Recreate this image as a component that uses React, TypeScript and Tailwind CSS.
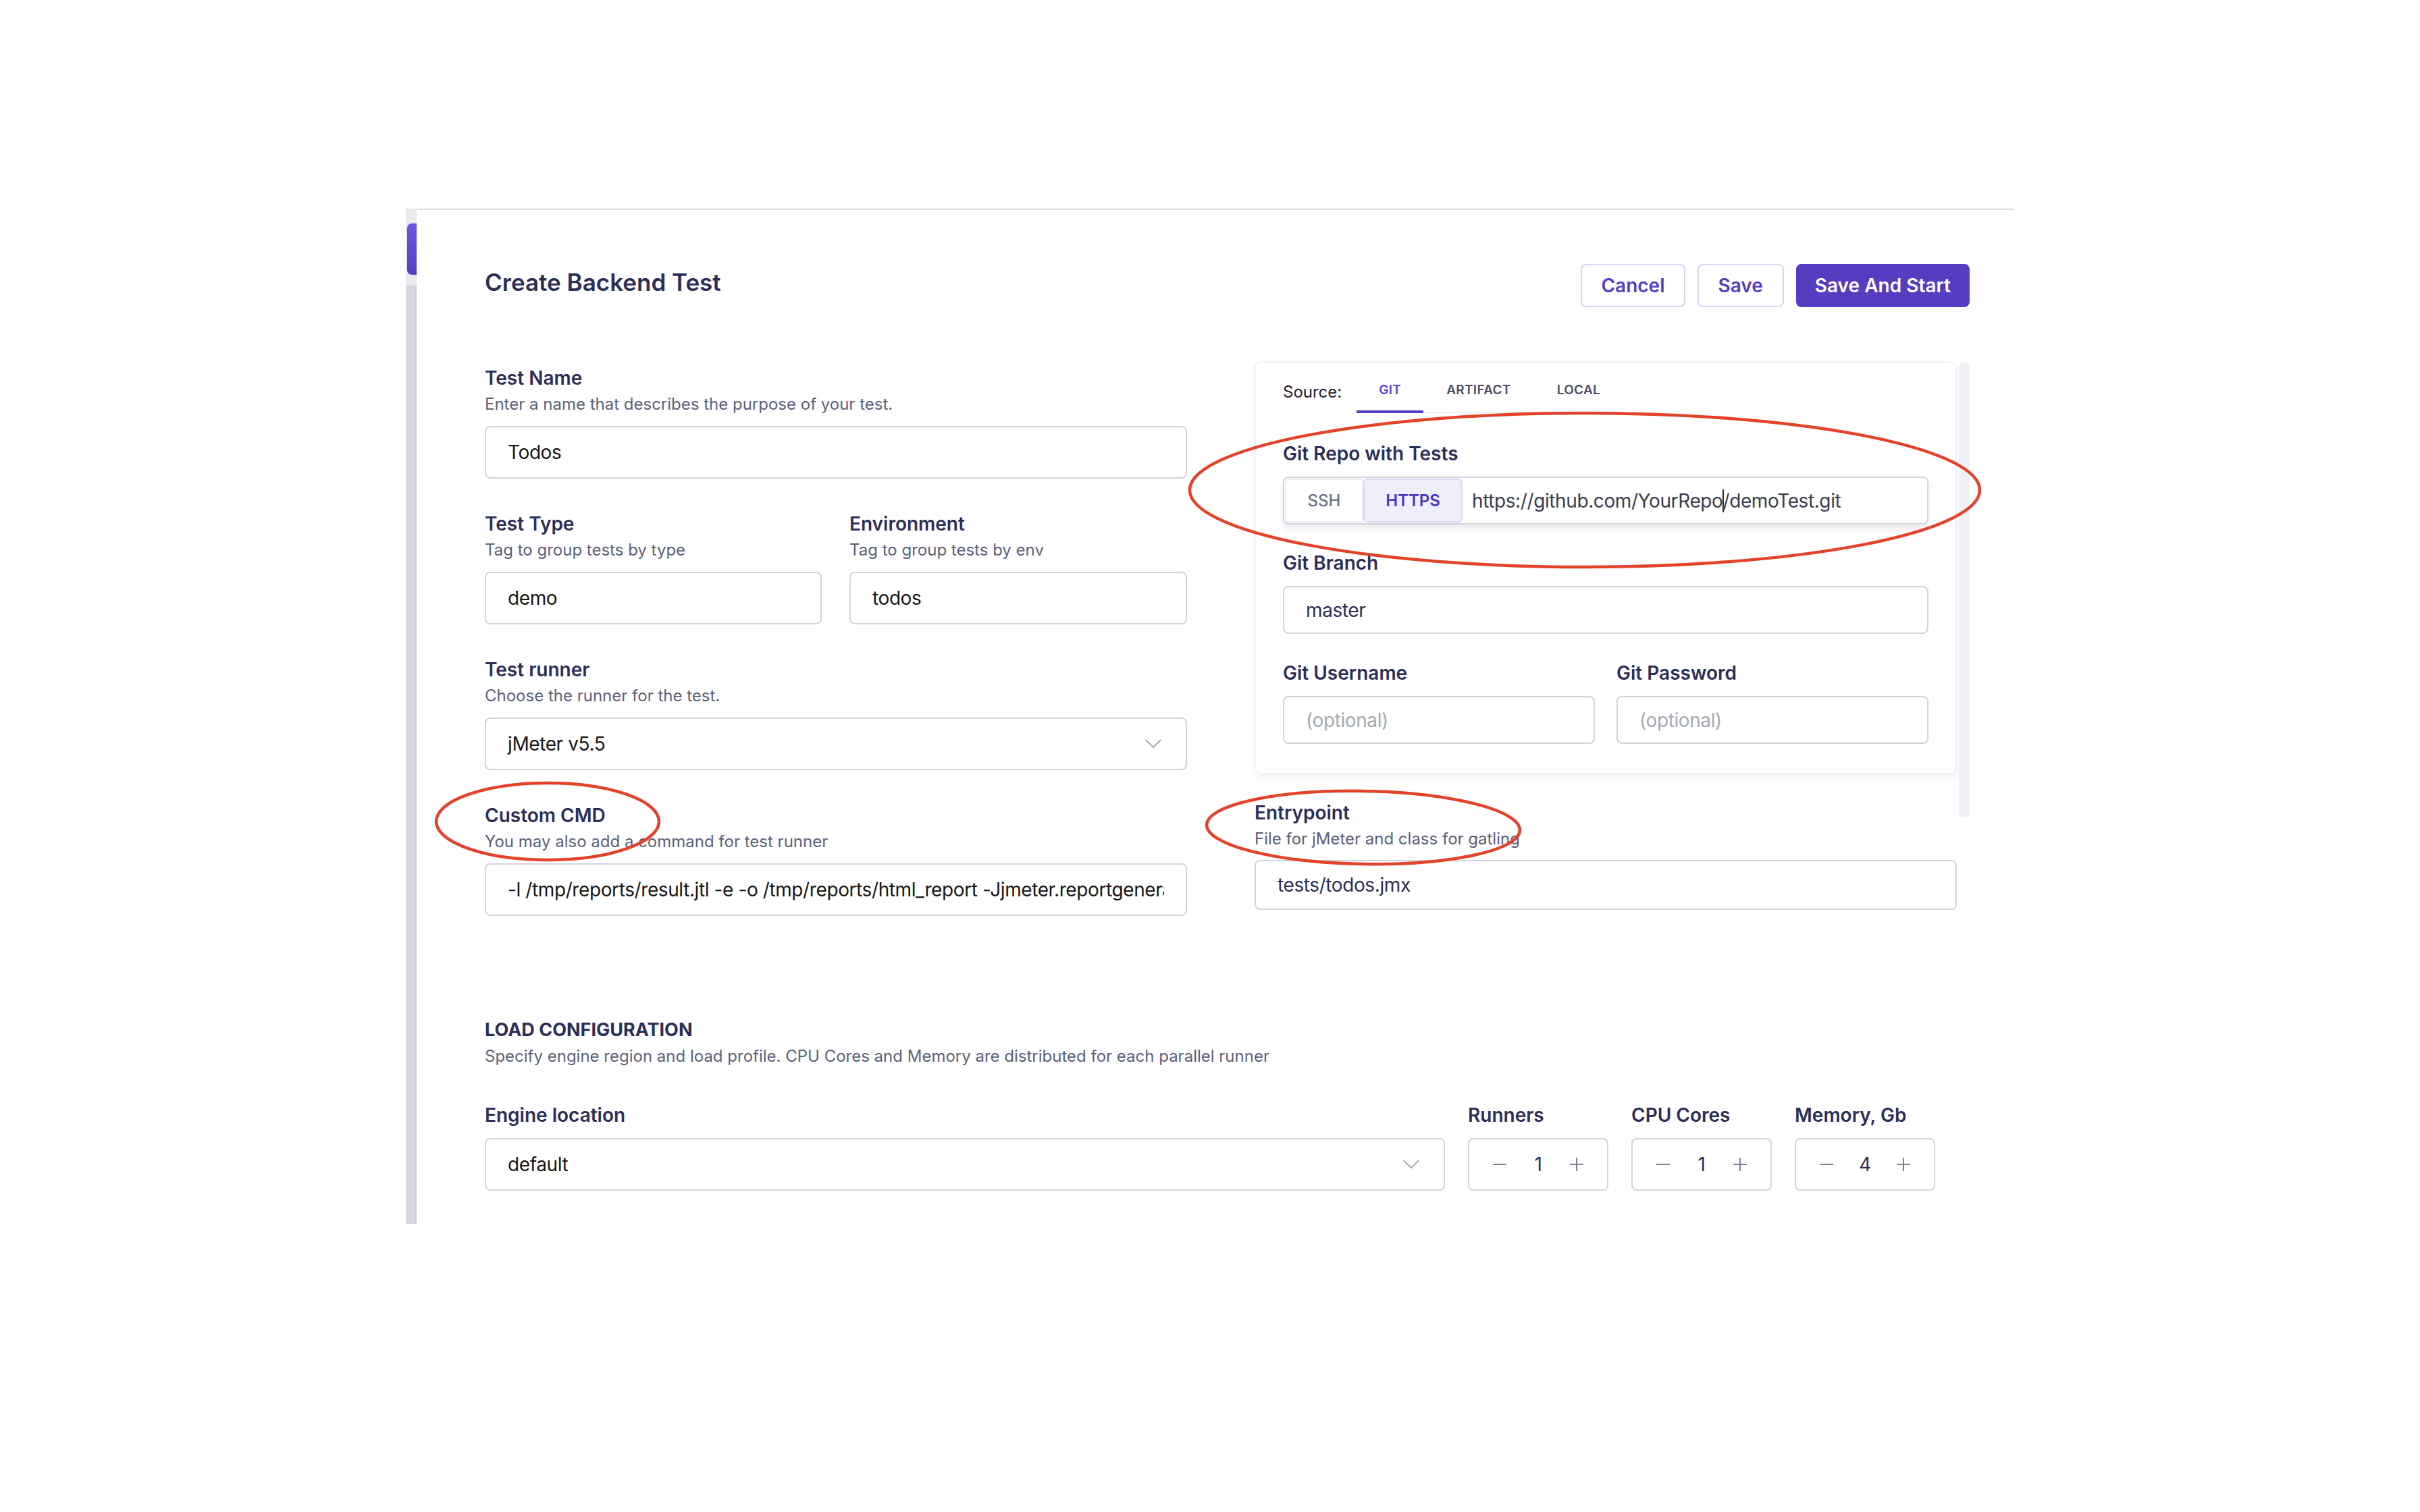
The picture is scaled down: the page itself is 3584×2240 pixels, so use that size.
import React from "react";

const Label = ({ children }: { children: React.ReactNode }) => (
  <div className="text-[28px] leading-[34px] font-semibold text-[#2c2e58]">{children}</div>
);

const Desc = ({ children }: { children: React.ReactNode }) => (
  <div className="mt-[7px] text-[24px] leading-[30px] text-[#5b5f7b]">{children}</div>
);

const Box = ({
  children,
  className = "",
}: {
  children?: React.ReactNode;
  className?: string;
}) => (
  <div
    className={`flex items-center border-2 border-[#d0d4db] rounded-[8px] bg-white text-[28px] tracking-[-0.4px] ${className}`}
  >
    {children}
  </div>
);

const Chevron = () => (
  <svg width="24" height="14" viewBox="0 0 24 14" fill="none">
    <path d="M1 1.5 L12 12 L23 1.5" stroke="#a3a8b3" strokeWidth="2" strokeLinecap="round" />
  </svg>
);

const Field = ({
  label,
  desc,
  children,
}: {
  label: string;
  desc?: string;
  children: React.ReactNode;
}) => (
  <div className="flex flex-col">
    <Label>{label}</Label>
    {desc && <Desc>{desc}</Desc>}
    {children}
  </div>
);

const Stepper = ({ label, value }: { label: string; value: number }) => (
  <div className="flex flex-col w-[208px]">
    <Label>{label}</Label>
    <Box className="mt-[17px] h-[78px] px-[34px] justify-between">
      <svg width="22" height="22" viewBox="0 0 22 22">
        <path d="M1 11 H21" stroke="#7d8197" strokeWidth="2" />
      </svg>
      <span className="text-[#2c2e58]">{value}</span>
      <svg width="22" height="22" viewBox="0 0 22 22">
        <path d="M1 11 H21 M11 1 V21" stroke="#7d8197" strokeWidth="2" />
      </svg>
    </Box>
  </div>
);

export default function App() {
  return (
    <div className="relative w-[3584px] h-[2240px] bg-white font-['Inter','Liberation_Sans',sans-serif] overflow-hidden">
      <div className="flex pt-[309px] pl-[601px]">
        {/* side strip */}
        <div className="w-[16px] h-[1504px] flex flex-col bg-[#d6d8e4] border-r-[3px] border-[#cbcdda]">
          <div className="h-[114px] bg-[#e9e9ee] -mr-[3px] pt-[22px] pl-[2px]">
            <div className="h-[76px] w-[14px] rounded-l-[7px] bg-gradient-to-b from-[#6c54e2] to-[#5640c2]" />
          </div>
        </div>

        {/* main panel */}
        <div className="w-[2366px] border-t-2 border-[#dcdde1] pl-[101px] pr-[66px]">
          {/* header */}
          <div className="mt-[80px] flex justify-between items-start">
            <h1 className="mt-[6px] text-[35px] leading-[42px] font-semibold text-[#2c2e58]">
              Create Backend Test
            </h1>
            <div className="flex gap-[18px]">
              <button className="h-[64px] px-[28px] rounded-[8px] border-2 border-[#d8d3f4] text-[28px] font-semibold text-[#553dc2]">
                Cancel
              </button>
              <button className="h-[64px] px-[29px] rounded-[8px] border-2 border-[#d8d3f4] text-[28px] font-semibold text-[#553dc2]">
                Save
              </button>
              <button className="h-[64px] px-[26px] rounded-[8px] border-2 border-[#553cc0] bg-[#553cc0] text-[28px] font-semibold text-white">
                Save And Start
              </button>
            </div>
          </div>

          {/* form columns */}
          <div className="mt-[80px] flex gap-[100px]">
            {/* left column */}
            <div className="w-[1040px] pt-[8px] flex flex-col gap-[50px]">
              <Field label="Test Name" desc="Enter a name that describes the purpose of your test.">
                <Box className="mt-[17px] h-[78px] px-[32px] text-[#161616]">Todos</Box>
              </Field>
              <div className="flex gap-[41px]">
                <div className="w-[499px]">
                  <Field label="Test Type" desc="Tag to group tests by type">
                    <Box className="mt-[17px] h-[78px] px-[32px] text-[#161616]">demo</Box>
                  </Field>
                </div>
                <div className="w-[500px]">
                  <Field label="Environment" desc="Tag to group tests by env">
                    <Box className="mt-[17px] h-[78px] px-[32px] text-[#161616]">todos</Box>
                  </Field>
                </div>
              </div>
              <Field label="Test runner" desc="Choose the runner for the test.">
                <Box className="mt-[17px] h-[78px] pl-[32px] pr-[36px] justify-between text-[#161616]">
                  <span>jMeter v5.5</span>
                  <Chevron />
                </Box>
              </Field>
              <Field label="Custom CMD" desc="You may also add a command for test runner">
                <Box className="mt-[17px] h-[78px] px-[32px] text-[#161616]">
                  <div className="overflow-hidden whitespace-nowrap">
                    -l /tmp/reports/result.jtl -e -o /tmp/reports/html_report -Jjmeter.reportgenerator.overall_granularity=1000
                  </div>
                </Box>
              </Field>
            </div>

            {/* right column */}
            <div className="flex gap-[3px]">
              <div className="w-[1040px] flex flex-col">
                <div className="rounded-[10px] border-2 border-[#f1f2f5] bg-white shadow-[0_6px_14px_rgba(30,35,60,0.06)] pt-[23px] pb-[43px] px-[40px]">
                  {/* source tabs */}
                  <div className="flex items-start">
                    <div className="mt-[6px] text-[24px] leading-[30px] text-[#1f2030]">Source:</div>
                    <div className="ml-[22px] flex border-b-2 border-[#eceef2]">
                      <div className="-mb-[2px] px-[33px] pt-[5px] pb-[17px] border-b-4 border-[#553cc0] text-[19px] leading-[26px] font-semibold tracking-[0.3px] text-[#5a41d2]">
                        GIT
                      </div>
                      <div className="-mb-[2px] px-[34px] pt-[5px] pb-[17px] border-b-4 border-transparent text-[19px] leading-[26px] font-semibold tracking-[0.3px] text-[#4a4d66]">
                        ARTIFACT
                      </div>
                      <div className="-mb-[2px] px-[34px] pt-[5px] pb-[17px] border-b-4 border-transparent text-[19px] leading-[26px] font-semibold tracking-[0.3px] text-[#4a4d66]">
                        LOCAL
                      </div>
                    </div>
                  </div>

                  <div className="mt-[43px]">
                    <Label>Git Repo with Tests</Label>
                    <div className="mt-[17px] h-[71px] flex items-stretch border-2 border-[#d0d4db] rounded-[8px] bg-white shadow-[0_6px_10px_rgba(20,25,50,0.09)] p-[1px]">
                      <div className="w-[116px] flex items-center justify-center border-2 border-[#eceef2] rounded-l-[6px] text-[24px] font-medium text-[#6b7083]">
                        SSH
                      </div>
                      <div className="w-[147px] flex items-center justify-center border-2 border-[#d8d4f6] bg-[#efeffc] rounded-[6px] text-[24px] font-semibold text-[#4a38c2]">
                        HTTPS
                      </div>
                      <div className="ml-[14px] flex items-center text-[28px] tracking-[-0.4px] text-[#3a3c4e]">
                        https://github.com/YourRepo
                        <span className="inline-block w-[2px] h-[34px] bg-[#2a2a2a] -mr-[2px]" />
                        /demoTest.git
                      </div>
                    </div>
                  </div>

                  <div className="mt-[40px]">
                    <Label>Git Branch</Label>
                    <Box className="mt-[17px] h-[71px] px-[32px] text-[#2c2e58]">master</Box>
                  </div>

                  <div className="mt-[41px] flex gap-[32px]">
                    <div className="w-[462px]">
                      <Label>Git Username</Label>
                      <Box className="mt-[17px] h-[71px] px-[32px] text-[#a4a9b3]">(optional)</Box>
                    </div>
                    <div className="w-[462px]">
                      <Label>Git Password</Label>
                      <Box className="mt-[17px] h-[71px] px-[32px] text-[#a4a9b3]">(optional)</Box>
                    </div>
                  </div>
                </div>

                <div className="mt-[40px]">
                  <Field label="Entrypoint" desc="File for jMeter and class for gatling">
                    <Box className="mt-[16px] h-[74px] px-[32px] text-[#2c2e58]">tests/todos.jmx</Box>
                  </Field>
                </div>
              </div>
              {/* scrollbar */}
              <div className="mt-[1px] w-[16px] h-[675px] rounded-full bg-[#eef1f5]" />
            </div>
          </div>

          {/* load configuration */}
          <div className="mt-[152px]">
            <div className="text-[27px] leading-[34px] font-bold text-[#2c2e58] uppercase">
              Load configuration
            </div>
            <Desc>
              Specify engine region and load profile. CPU Cores and Memory are distributed for each parallel runner
            </Desc>
            <div className="mt-[55px] flex gap-[34px]">
              <div className="w-[1422px]">
                <Label>Engine location</Label>
                <Box className="mt-[17px] h-[78px] pl-[32px] pr-[36px] justify-between text-[#161616]">
                  <span>default</span>
                  <Chevron />
                </Box>
              </div>
              <Stepper label="Runners" value={1} />
              <Stepper label="CPU Cores" value={1} />
              <Stepper label="Memory, Gb" value={4} />
            </div>
          </div>
        </div>
      </div>

      {/* hand-drawn annotation ellipses */}
      <svg
        className="absolute left-0 top-0 pointer-events-none"
        width="3584"
        height="2240"
        viewBox="0 0 3584 2240"
        fill="none"
      >
        <ellipse cx="2347" cy="726" rx="585" ry="114" stroke="#e4432b" strokeWidth="4.5" />
        <ellipse cx="811" cy="1217" rx="165" ry="57" stroke="#e4432b" strokeWidth="4.5" />
        <ellipse cx="2019" cy="1226" rx="232" ry="54" stroke="#e4432b" strokeWidth="4.5" transform="rotate(1 2019 1226)" />
      </svg>
    </div>
  );
}
